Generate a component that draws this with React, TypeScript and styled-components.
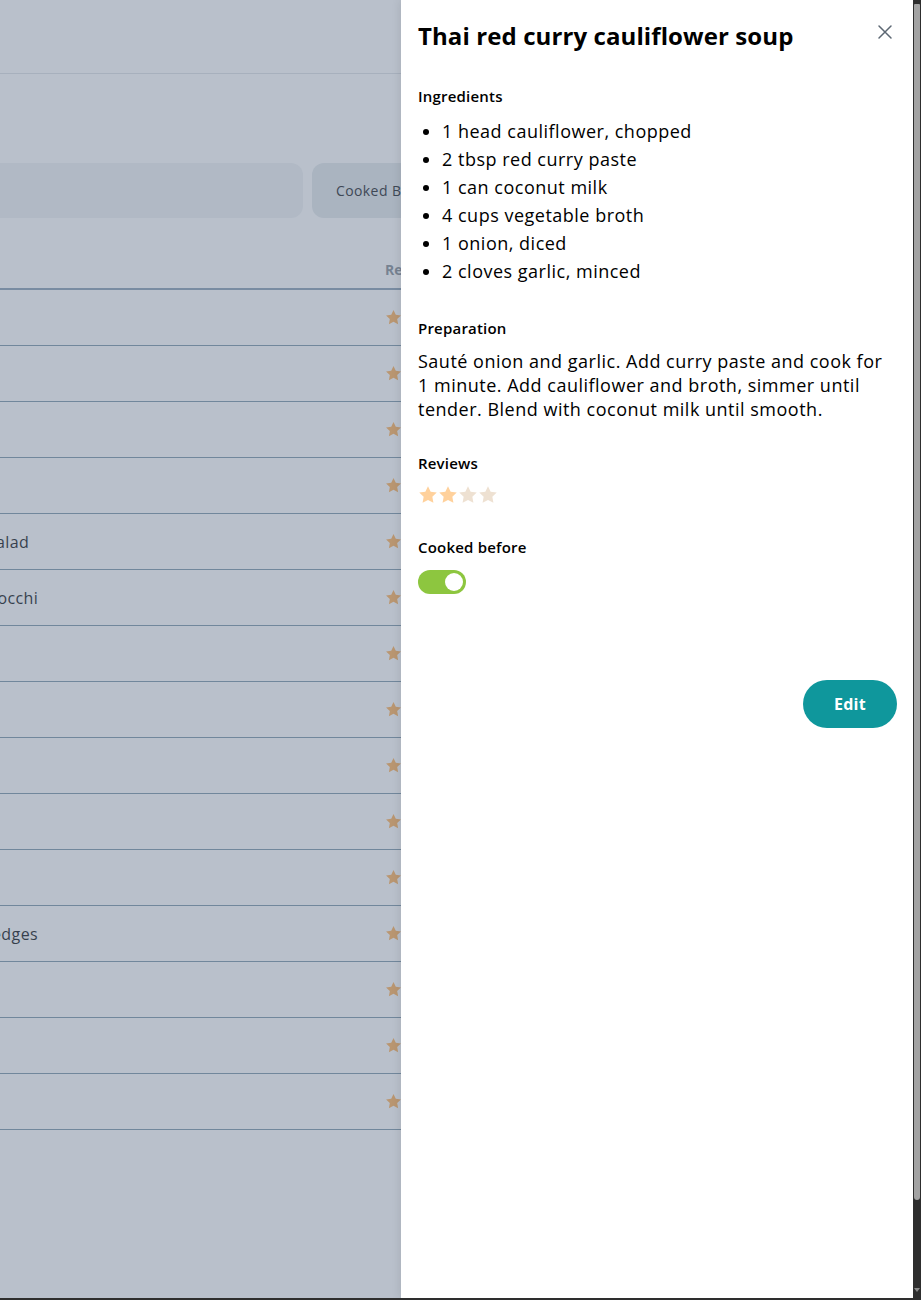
import React from 'react';
import styled, {createGlobalStyle} from 'styled-components';

const GlobalStyle = createGlobalStyle`
  body {
    margin: 0;
    overflow: hidden;
    background: #ffffff;
    color: #212529;
    font-family: 'Open Sans', 'DejaVu Sans', sans-serif;
  }
  * {
    box-sizing: border-box;
  }
`;

const FONT = `'Open Sans', 'DejaVu Sans', sans-serif`;

type Recipe = {name: string; rating: number};

const recipes: Recipe[] = [
  {name: 'Pad thai', rating: 4},
  {name: 'Ramen', rating: 3},
  {name: 'Tacos', rating: 5},
  {name: 'Lasagna', rating: 4},
  {name: 'Caesar salad', rating: 3},
  {name: 'Pesto gnocchi', rating: 4},
  {name: 'Risotto', rating: 2},
  {name: 'Chili', rating: 4},
  {name: 'Falafel', rating: 3},
  {name: 'Dal', rating: 5},
  {name: 'Burrito', rating: 4},
  {name: 'Cajun wedges', rating: 3},
  {name: 'Pho', rating: 4},
  {name: 'Paella', rating: 5},
  {name: 'Gumbo', rating: 3},
];

const ingredients = [
  '1 head cauliflower, chopped',
  '2 tbsp red curry paste',
  '1 can coconut milk',
  '4 cups vegetable broth',
  '1 onion, diced',
  '2 cloves garlic, minced',
];

/* ---------- window shell: viewport + scroll rail ---------- */

const Shell = styled.div`
  display: flex;
  height: 100vh;
  border-bottom: 2px solid #2e2e2e;
`;

const Viewport = styled.div`
  position: relative;
  flex: 1;
  overflow: hidden;
`;

const ScrollRail = styled.div`
  display: flex;
  flex-direction: column;
  align-items: center;
  flex: 0 0 8px;
  background: #2e2e2e;
  padding: 4px 1px 6px;
`;

const ScrollThumb = styled.div`
  width: 6px;
  height: 1196px;
  background: #a3a3a3;
  border-radius: 1px 1px 3px 3px;
`;

const ScrollArrow = styled.div`
  margin-top: auto;
  width: 0;
  height: 0;
  border-left: 3px solid transparent;
  border-right: 3px solid transparent;
  border-top: 4px solid #8a8a8a;
`;

/* ---------- page behind the drawer ---------- */

const Page = styled.div`
  font-family: ${FONT};
`;

const Header = styled.header`
  height: 74px;
  border-bottom: 1px solid #dee2e6;
`;

// the page is scrolled sideways, so its left part sits off screen
const Main = styled.main`
  margin-left: -70px;
  width: 800px;
  padding-top: 89px;
`;

const FilterRow = styled.div`
  display: flex;
  gap: 9px;
  height: 55px;
`;

const SearchBox = styled.div`
  flex: 0 0 373px;
  background: #f1f3f5;
  border-radius: 12px;
`;

const Chip = styled.div`
  display: flex;
  align-items: center;
  padding: 0 24px;
  background: #e4e9ec;
  border-radius: 12px;
  font-size: 14px;
  letter-spacing: 0.4px;
  color: #212529;
  white-space: nowrap;
`;

const Table = styled.div`
  margin-top: 32px;
`;

const HeadRow = styled.div`
  display: grid;
  grid-template-columns: 455px 1fr;
  height: 40px;
  align-items: center;
  border-bottom: 2px solid #8aa0b4;
`;

const HeadCell = styled.div`
  font-size: 14px;
  font-weight: 700;
  color: #868e96;
`;

const Row = styled.div`
  display: grid;
  grid-template-columns: 455px 1fr;
  height: 56px;
  align-items: center;
  border-bottom: 1px solid #7d98aa;
  font-size: 16px;
  letter-spacing: 0.4px;
  color: #101418;
`;

const NameCell = styled.div`
  white-space: nowrap;
`;

const RowStar = styled.svg`
  width: 17px;
  height: 17px;
  fill: #ffb35c;
  display: block;
`;

const Overlay = styled.div`
  position: absolute;
  inset: 0;
  background: rgba(100, 116, 139, 0.45);
`;

/* ---------- drawer ---------- */

const Drawer = styled.aside`
  position: absolute;
  top: 0;
  right: 0;
  bottom: 0;
  width: 512px;
  background: #ffffff;
  box-shadow: -2px 0 8px rgba(0, 0, 0, 0.08);
  padding: 18px 16px 16px 17px;
  font-family: ${FONT};
  color: #000;
`;

const TitleBar = styled.div`
  display: flex;
  justify-content: space-between;
  align-items: flex-start;
`;

const Title = styled.h2`
  margin: 0;
  font-size: 24px;
  font-weight: 700;
  line-height: 36px;
  letter-spacing: 0.1px;
`;

const CloseButton = styled.button`
  border: 0;
  background: none;
  padding: 0;
  margin: 6px 4px 0 0;
  width: 16px;
  height: 16px;
  color: #5c6773;
  cursor: pointer;
  svg {
    display: block;
  }
`;

const Section = styled.section<{$gap?: number}>`
  display: flex;
  flex-direction: column;
  margin-top: ${p => p.$gap ?? 24}px;
`;

const Label = styled.h3`
  margin: 0 0 9px;
  font-size: 15px;
  font-weight: 600;
  line-height: 22px;
  letter-spacing: 0.2px;
`;

const List = styled.ul`
  margin: 0;
  padding: 1px 0 0 24px;
  font-size: 18px;
  line-height: 28px;
  letter-spacing: 0.5px;
`;

const Paragraph = styled.p`
  margin: 0;
  padding-top: 1px;
  font-size: 18px;
  line-height: 24px;
  letter-spacing: 0.5px;
`;

const Stars = styled.div`
  display: flex;
  padding-top: 2px;
`;

const Star = styled.svg<{$on: boolean}>`
  width: 20px;
  height: 20px;
  fill: ${p => (p.$on ? '#ffd19c' : '#eee1d2')};
`;

const Toggle = styled.div<{$on: boolean}>`
  position: relative;
  width: 48px;
  height: 24px;
  margin-top: 3px;
  border-radius: 12px;
  background: ${p => (p.$on ? '#8dc63f' : '#dee2e6')};
  &::after {
    content: '';
    position: absolute;
    top: 3px;
    left: ${p => (p.$on ? '27px' : '3px')};
    width: 18px;
    height: 18px;
    border-radius: 50%;
    background: #fff;
  }
`;

const Actions = styled.div`
  display: flex;
  justify-content: flex-end;
  margin-top: 86px;
`;

const EditButton = styled.button`
  width: 94px;
  height: 48px;
  border: 0;
  border-radius: 24px;
  background: #0f979c;
  color: #fff;
  font-family: ${FONT};
  font-size: 16px;
  font-weight: 700;
  letter-spacing: 0.3px;
  cursor: pointer;
`;

const starPath =
  'M12 1.5l3.2 6.6 7.3 1-5.3 5.1 1.3 7.2L12 18l-6.5 3.4 1.3-7.2L1.5 9.1l7.3-1z';

export default function App() {
  return (
    <>
      <GlobalStyle />
      <Shell>
        <Viewport>
          <Page>
            <Header />
            <Main>
              <FilterRow>
                <SearchBox />
                <Chip>Cooked Before</Chip>
              </FilterRow>
              <Table>
                <HeadRow>
                  <HeadCell>Name</HeadCell>
                  <HeadCell>Reviews</HeadCell>
                </HeadRow>
                {recipes.map(r => (
                  <Row key={r.name}>
                    <NameCell>{r.name}</NameCell>
                    <RowStar viewBox="0 0 24 24">
                      <path d={starPath} />
                    </RowStar>
                  </Row>
                ))}
              </Table>
            </Main>
          </Page>
          <Overlay />
          <Drawer>
            <TitleBar>
              <Title>Thai red curry cauliflower soup</Title>
              <CloseButton aria-label="Close">
                <svg width="16" height="16" viewBox="0 0 16 16" fill="none">
                  <path
                    d="M2 2l12 12M14 2L2 14"
                    stroke="currentColor"
                    strokeWidth="1.5"
                    strokeLinecap="round"
                  />
                </svg>
              </CloseButton>
            </TitleBar>
            <Section $gap={31}>
              <Label>Ingredients</Label>
              <List>
                {ingredients.map(i => (
                  <li key={i}>{i}</li>
                ))}
              </List>
            </Section>
            <Section $gap={32}>
              <Label>Preparation</Label>
              <Paragraph>
                Sauté onion and garlic. Add curry paste and cook for 1 minute.
                Add cauliflower and broth, simmer until tender. Blend with
                coconut milk until smooth.
              </Paragraph>
            </Section>
            <Section $gap={31}>
              <Label>Reviews</Label>
              <Stars>
                {[1, 2, 3, 4].map(n => (
                  <Star key={n} $on={n <= 2} viewBox="0 0 24 24">
                    <path d={starPath} />
                  </Star>
                ))}
              </Stars>
            </Section>
            <Section $gap={31}>
              <Label>Cooked before</Label>
              <Toggle $on />
            </Section>
            <Actions>
              <EditButton>Edit</EditButton>
            </Actions>
          </Drawer>
        </Viewport>
        <ScrollRail>
          <ScrollThumb />
          <ScrollArrow />
        </ScrollRail>
      </Shell>
    </>
  );
}
